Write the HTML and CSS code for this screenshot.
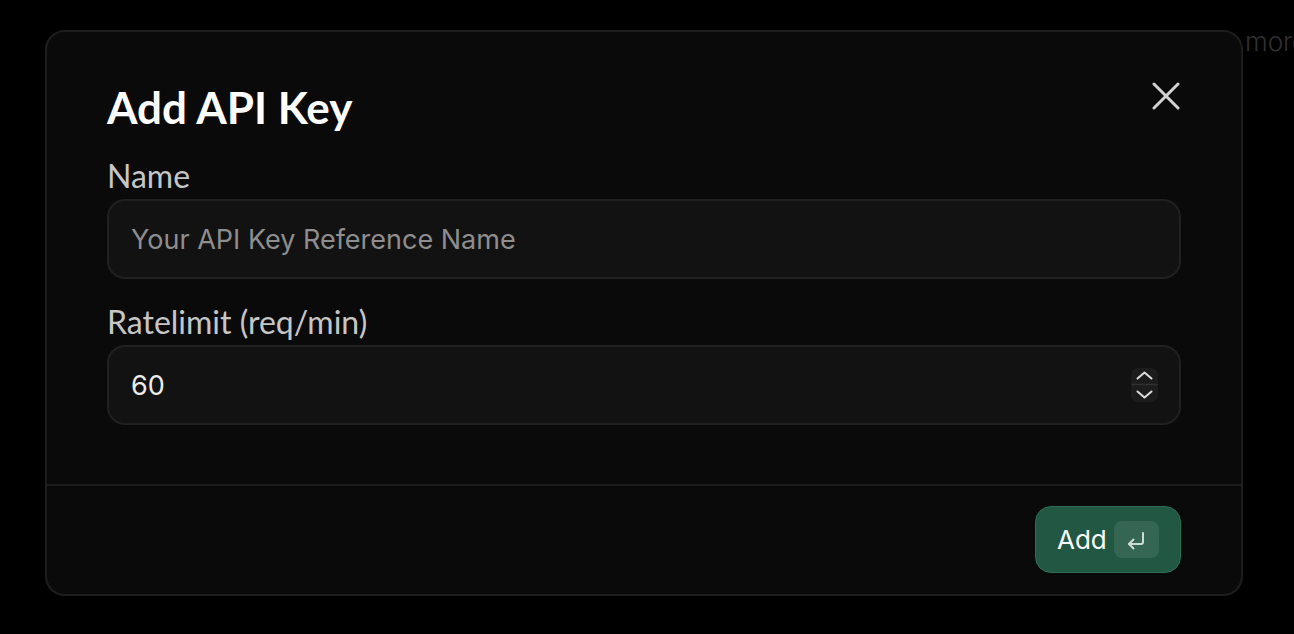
FILE: index.html
```html
<!DOCTYPE html>
<html lang="en">
<head>
<meta charset="utf-8">
<title>Add API Key</title>
<link rel="stylesheet" href="styles.css">
</head>
<body>
<div class="page">
  <div class="bg-line">
    <span class="bg-hidden">Use API keys to access the service programmatically. Each key has its own rate limit, read</span>
    <span class="bg-more">more</span>
  </div>
</div>

<div class="modal" role="dialog" aria-labelledby="modal-title">
  <div class="modal-body">
    <div class="modal-head">
      <h1 id="modal-title" class="modal-title">Add API Key</h1>
      <button class="close-btn" aria-label="Close">
        <svg width="28" height="28" viewBox="0 0 28 28" fill="none" stroke="#d2d2d2" stroke-width="3" stroke-linecap="round"><path d="M2 2 L26 26 M26 2 L2 26"/></svg>
      </button>
    </div>
    <label class="field-label" for="name">Name</label>
    <div class="input">
      <input id="name" class="input-el" type="text" placeholder="Your API Key Reference Name">
    </div>
    <label class="field-label field-label-2" for="rate">Ratelimit (req/min)</label>
    <div class="input">
      <input id="rate" class="input-el" type="text" value="60">
      <span class="spinner">
        <svg width="27" height="34" viewBox="0 0 27 34" fill="none" stroke="#dcdcdc" stroke-width="2" stroke-linecap="round" stroke-linejoin="round"><path d="M6.5 10.5 L13.5 4.5 L20.5 10.5"/><path d="M6.5 23.5 L13.5 29.5 L20.5 23.5"/><path d="M1 16.5 H26" stroke="#303030" stroke-width="1.5"/></svg>
      </span>
    </div>
  </div>
  <div class="modal-footer">
    <button class="add-btn">Add <span class="kbd"><svg width="22" height="20" viewBox="0 0 22 20" fill="none" stroke="#cfdcd6" stroke-width="2" stroke-linecap="round" stroke-linejoin="round"><path d="M18 3 V12 Q18 14 16 14 H4"/><path d="M8.5 9.5 L4 14 L8.5 18.5"/></svg></span></button>
  </div>
</div>
</body>
</html>
```

FILE: styles.css
```css
* { box-sizing: border-box; }

html, body {
  margin: 0;
  padding: 0;
  background: #000;
  width: 1294px;
  height: 634px;
  overflow: hidden;
}

body {
  font-family: "Inter", "Noto Sans", sans-serif;
  color: #fff;
}

.page {
  padding-top: 24px;
}

.bg-line {
  display: flex;
  white-space: nowrap;
  font-size: 26px;
  line-height: 36px;
  font-weight: 300;
  color: #303030;
}

.bg-hidden {
  width: 1245px;
  flex: none;
  padding-left: 60px;
}

.bg-more {
  flex: none;
}

.modal {
  position: absolute;
  left: 45px;
  top: 30px;
  width: 1198px;
  height: 566px;
  background: #0a0a0a;
  border: 2px solid #1e1e1e;
  border-radius: 20px;
  display: flex;
  flex-direction: column;
}

.modal-body {
  flex: 1;
  padding: 51px 60px 0 60px;
  display: flex;
  flex-direction: column;
}

.modal-head {
  display: flex;
  justify-content: space-between;
  align-items: flex-start;
}

.modal-title {
  margin: 0;
  font-family: "Lato", sans-serif;
  font-weight: 700;
  font-size: 44px;
  line-height: 48px;
  color: #fff;
}

.close-btn {
  background: none;
  border: 0;
  padding: 0;
  margin-top: -1px;
  margin-right: 1px;
  width: 28px;
  height: 28px;
  cursor: pointer;
}

.close-btn svg { display: block; }

.field-label {
  display: block;
  margin-top: 28px;
  font-family: "Lato", sans-serif;
  font-size: 32px;
  line-height: 34px;
  color: #c6c6c6;
}

.field-label-2 {
  margin-top: 26px;
}

.input {
  margin-top: 6px;
  height: 80px;
  background: #121212;
  border: 2px solid #202020;
  border-radius: 18px;
  display: flex;
  align-items: center;
  padding: 0 21px 0 22px;
}

.input-el {
  flex: 1;
  min-width: 0;
  background: transparent;
  border: 0;
  outline: none;
  font-family: "Inter", sans-serif;
  font-size: 27px;
  color: #ececec;
  padding: 0;
}

.input-el::placeholder {
  color: #8e8e8e;
}

.spinner {
  width: 27px;
  height: 34px;
  background: #1c1c1c;
  border-radius: 7px;
  display: flex;
}

.spinner svg { display: block; }

.modal-footer {
  height: 110px;
  border-top: 2px solid #1c1c1c;
  padding: 20px 60px 0 60px;
  display: flex;
  justify-content: flex-end;
  align-items: flex-start;
}

.add-btn {
  height: 67px;
  width: 146px;
  background: #225744;
  border: 1.5px solid #2d6c56;
  border-radius: 16px;
  display: flex;
  align-items: center;
  padding: 0 0 0 21px;
  gap: 7px;
  font-family: "Inter", sans-serif;
  font-size: 26px;
  color: #fff;
  cursor: pointer;
}

.kbd {
  width: 45px;
  height: 37px;
  border-radius: 8px;
  background: rgba(255, 255, 255, 0.09);
  display: flex;
  align-items: center;
  justify-content: center;
}

.kbd svg { display: block; }
```
